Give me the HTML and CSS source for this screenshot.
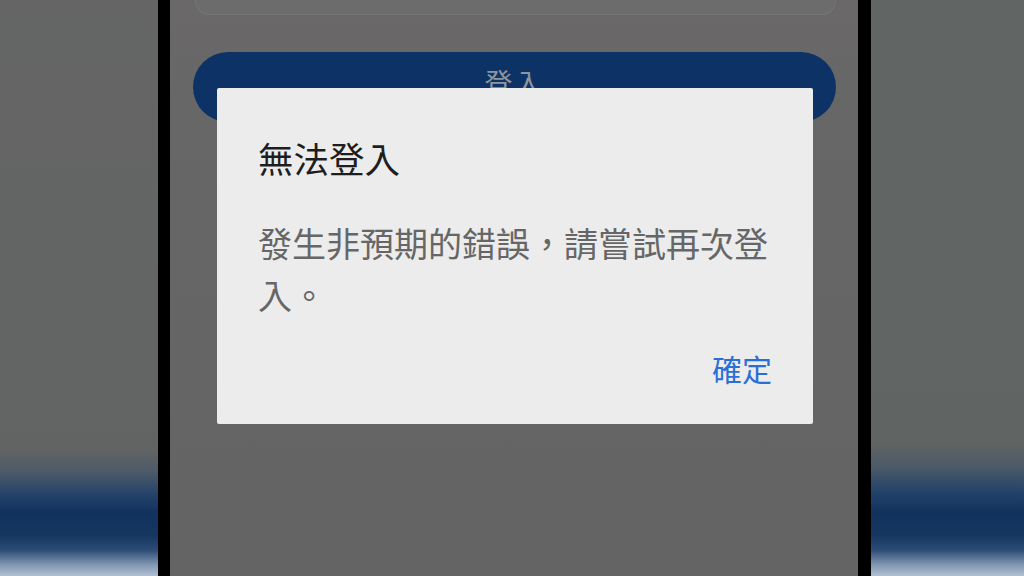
FILE: index.html
```html
<!DOCTYPE html>
<html>
<head>
    <meta charset="utf-8">
    <link rel="stylesheet" href="styles.css">
</head>
<body>
    <div class="frame">
        <div class="side"></div>
        <div class="bezel"></div>

        <div class="screen">
            <!-- form card above, mostly scrolled out of view -->
            <div class="form-card"></div>
            <div class="login-button">登入</div>

            <!-- alert dialog -->
            <div class="dialog">
                <h2 class="dialog-title">無法登入</h2>
                <p class="dialog-message">發生非預期的錯誤，請嘗試再次登入。</p>
                <div class="dialog-actions">
                    <button type="button" class="dialog-button">確定</button>
                </div>
            </div>
        </div>

        <div class="bezel bezel-right"></div>
        <div class="side side-right"></div>
    </div>
</body>
</html>
```

FILE: styles.css
```css
body {
    margin: 0;
    background: #646464;
    font-family: "Noto Sans CJK TC", "Noto Sans", sans-serif;
    overflow: hidden;
}

.frame {
    display: flex;
    width: 1024px;
    height: 576px;
}

.side {
    width: 158px;
    background: linear-gradient(to bottom,
        #656565 0%,
        #626464 78%,
        #4c5a68 82%,
        #23426a 86%,
        #12325e 89%,
        #14365f 93%,
        #2c4c76 95.5%,
        #8095b0 98%,
        #b0c0d2 100%);
}

.side-right {
    width: 153px;
    background: linear-gradient(to bottom,
        #616564 0%,
        #606463 77%,
        #4c5a68 81%,
        #23426a 85.5%,
        #12325e 89%,
        #14365f 93%,
        #2c4c76 95.5%,
        #8095b0 98%,
        #b0c0d2 100%);
}

.bezel {
    width: 12px;
    background: #000;
}

.bezel-right {
    width: 13px;
}

.screen {
    position: relative;
    width: 688px;
    background: linear-gradient(to bottom, #6a6868 0%, #666666 30%, #646464 100%);
    padding: 0 22px 0 23px;
    box-sizing: border-box;
}

.form-card {
    height: 15px;
    margin: 0 0 0 2px;
    background: #6c6c6c;
    border: 1px solid #767676;
    border-top: none;
    border-radius: 0 0 14px 14px;
    box-sizing: border-box;
}

.login-button {
    margin-top: 37px;
    height: 70px;
    border-radius: 35px;
    background: #0d3366;
    color: #8e959e;
    font-size: 28px;
    line-height: 60px;
    text-align: center;
    letter-spacing: 2px;
}

.dialog {
    position: absolute;
    left: 47px;
    top: 88px;
    width: 596px;
    height: 336px;
    box-sizing: border-box;
    padding: 48px 41px 0 41px;
    background: #ececec;
    border-radius: 2px;
}

.dialog-title {
    margin: 0;
    font-size: 35.5px;
    font-weight: normal;
    line-height: 44px;
    color: #1e1e1e;
}

.dialog-message {
    margin: 37px 0 0 0;
    font-size: 34px;
    line-height: 52px;
    color: #666666;
}

.dialog-actions {
    display: flex;
    justify-content: flex-end;
    margin-top: 27px;
}

.dialog-button {
    border: none;
    background: none;
    padding: 0;
    font-family: inherit;
    font-size: 30px;
    line-height: 40px;
    color: #2b6fd6;
}
```
